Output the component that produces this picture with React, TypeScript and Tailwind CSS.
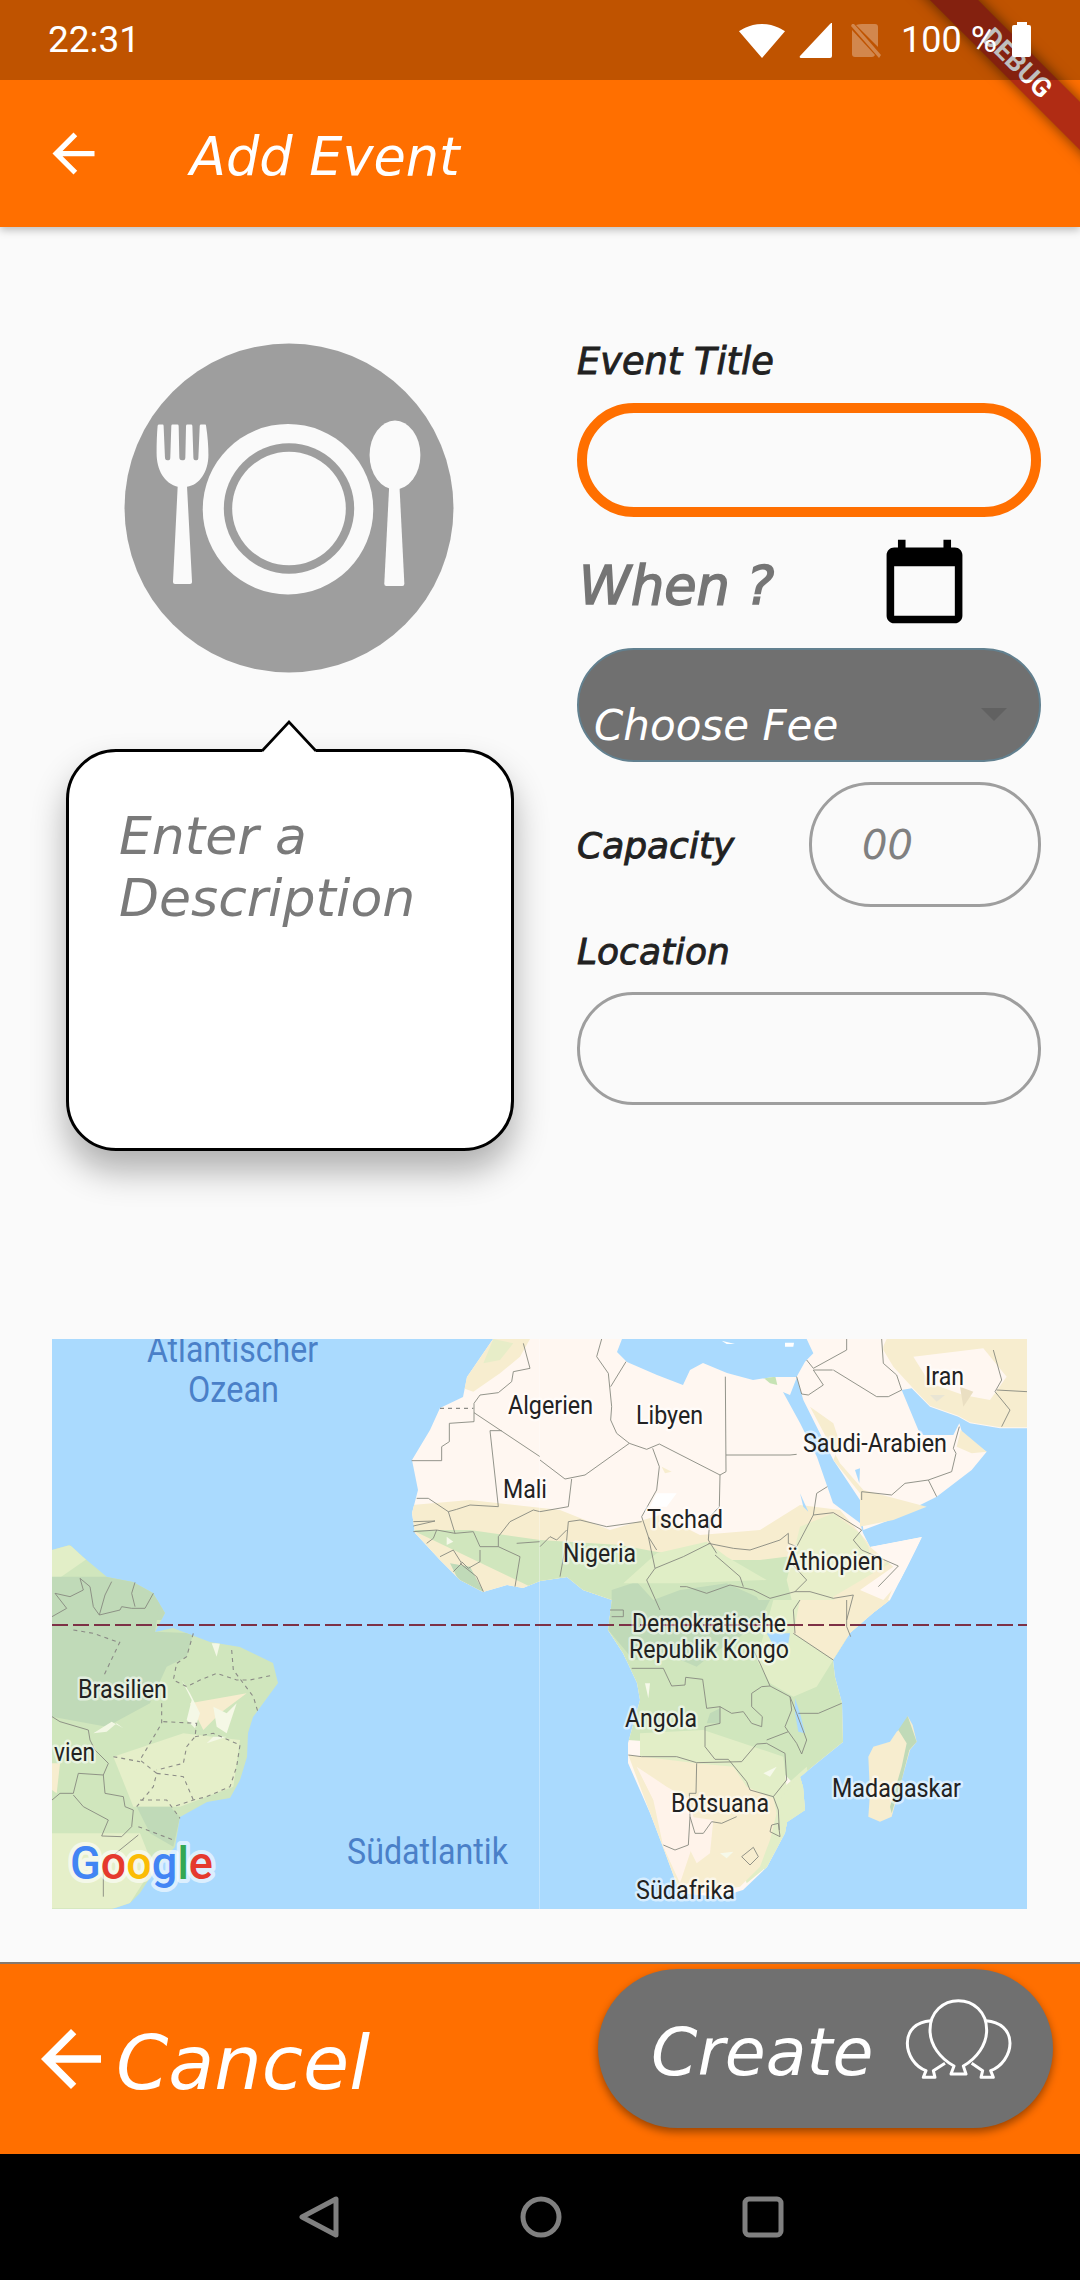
import React from "react";

const Z = ({ ox, oy, children }: { ox: number; oy: number; children: React.ReactNode }) => (
  <g transform={`translate(${ox} ${oy}) scale(${1 / 3})`}>{children}</g>
);

const B = ({ p, dash }: { p: string; dash?: boolean }) => (
  <polyline
    points={p}
    fill="none"
    stroke={dash ? "#8b8b86" : "#87897f"}
    strokeWidth={dash ? 1.1 : 0.9}
    strokeDasharray={dash ? "4 4" : undefined}
    vectorEffect="non-scaling-stroke"
  />
);

const F = ({ p, c }: { p: string; c: string }) => <polygon points={p} fill={c} />;

const L = ({ t, x, y, w, blue, halo }: { t: string; x: number; y: number; w: number; blue?: boolean; halo?: string }) => (
  <text
    x={x}
    y={y}
    textLength={w}
    lengthAdjust="spacingAndGlyphs"
    fontFamily="Roboto, sans-serif"
    fontSize={blue ? 36 : 25}
    fill={blue ? "#4a80c8" : "#222222"}
    stroke={blue ? "none" : halo ?? "rgba(255,255,255,0.55)"}
    strokeWidth={blue ? 0 : 5}
    strokeLinejoin="round"
    style={{ paintOrder: "stroke" }}
  >
    {t}
  </text>
);

const WATER = "#aadafe";
const CREAM = "#fff7f1";
const TAN = "#f7edcf";
const LIGHT = "#e2eec7";
const MID = "#d0e6bd";
const DARK = "#c0dab8";

const AFRICA =
  "493,1339 467,1377 463,1397 440,1408 430,1430 412,1460 418,1490 412,1513 415,1533 440,1560 460,1580 483,1592 507,1585 523,1588 540,1581 567,1577 583,1590 612,1600 608,1630 623,1653 637,1683 640,1700 628,1743 628,1763 650,1813 663,1847 680,1893 720,1897 743,1890 767,1867 785,1833 787,1822 805,1810 803,1787 800,1777 817,1763 843,1742 842,1703 835,1677 833,1660 850,1633 873,1613 890,1600 907,1567 922,1537 870,1547 863,1533 860,1523 833,1503 817,1457 800,1423 783,1392 790,1395 797,1377 773,1377 753,1380 727,1373 703,1363 690,1370 683,1385 657,1375 627,1362 617,1352 622,1339";

const ARABIA =
  "800,57 1461,57 1461,325 1380,325 1290,310 1255,290 1170,260 1115,205 1085,210 1135,330 1150,345 1240,345 1258,310 1270,350 1340,395 1295,450 1190,530 1050,600 970,630 960,540 880,420 830,320 790,240 770,170 795,125 820,100";

const SAMERICA =
  "52,1550 70,1545 83,1557 107,1577 133,1582 153,1593 165,1613 155,1632 173,1628 210,1642 240,1647 273,1663 278,1683 253,1717 248,1733 247,1757 240,1780 230,1798 207,1802 180,1817 175,1847 157,1867 140,1893 130,1903 112,1909 52,1909";

function MapView() {
  return (
    <svg viewBox="52 1339 975 570" className="block w-full h-full">
      <defs>
        <clipPath id="africa">
          <polygon points={AFRICA} />
        </clipPath>
        <clipPath id="samerica">
          <polygon points={SAMERICA} />
        </clipPath>
      </defs>
      <rect x="52" y="1339" width="975" height="570" fill={WATER} />

      <g clipPath="url(#samerica)">
        <rect x="52" y="1500" width="300" height="420" fill={MID} />
        <Z ox={40} oy={1320}>
          <F p="36,660 130,690 150,710 36,790" c={LIGHT} />
          <F p="36,770 370,770 380,900 36,900" c={DARK} />
        </Z>
        <Z ox={40} oy={1600}>
          <F p="0,0 360,0 345,95 460,100 440,170 380,200 330,310 200,380 36,350" c={DARK} />
          <F p="220,470 430,400 600,420 580,560 420,620 280,620" c="#e5efc9" />
          <F p="450,310 620,280 540,340 490,390" c={TAN} />
          <F p="36,700 300,700 340,800 260,925 36,925" c="#e5efc9" />
          <F p="36,580 100,580 130,620 60,660 36,640" c={MID} />
          <F p="36,490 60,490 50,580 36,570" c={TAN} />
          <F p="290,620 390,620 420,650 400,740 330,700" c={DARK} />
          <F p="425,240 455,300 440,360 465,385 480,340 450,280" c="#f4f8e6" />
          <F p="520,320 560,340 590,310 560,400 530,380" c="#f5f8e6" />
          <F p="160,400 215,365 250,385 230,370 200,395" c="#f2f7e4" />
          <F p="500,430 520,410 560,410" c="#f4f8e6" />
          <F p="515,130 530,170 540,130" c="#f4f8e6" />
        </Z>
      </g>

      <g clipPath="url(#africa)">
        <rect x="400" y="1339" width="560" height="570" fill={CREAM} />
        <F p="412,1505 470,1500 560,1510 610,1530 660,1515 700,1535 760,1530 800,1505 840,1510 870,1545 900,1570 880,1620 830,1660 620,1660 412,1560" c={TAN} />
        <F p="412,1530 470,1530 540,1540 620,1545 700,1560 760,1560 800,1555 830,1560 800,1630 860,1640 860,1770 800,1790 770,1760 700,1745 628,1740 600,1620" c={MID} />
        <Z ox={40} oy={1320}>
          <F p="1360,57 1470,57 1440,110 1380,160 1300,215 1270,205 1285,140" c={TAN} />
          <F p="1360,57 1420,70 1380,120 1330,130" c="#e7edc8" />
          <F p="1230,730 1290,740 1330,815 1260,790" c={DARK} />
          <F p="1220,650 1240,665 1220,675" c="#f6f9ea" />
        </Z>
        <Z ox={540} oy={1320}>
          <F p="215,860 215,810 290,785 340,840 420,810 560,790 650,830 680,880 690,900 215,900" c={DARK} />
          <F p="350,520 410,520 380,560 330,560" c="#ffffff" />
          <F p="780,620 880,580 960,640 985,680 1000,760 1130,650 1000,880 900,900 770,900 740,780" c="#e8efca" />
          <F p="880,830 1100,700 1000,880 900,900" c={TAN} />
          <F p="990,680 1145,650 1100,760 1030,840 960,810 1060,740" c={CREAM} />
          <F p="672,175 705,165 712,195 690,190" c="#c6e3b4" />
          <F p="365,440 395,455 375,460" c={TAN} />
          <F p="780,520 805,575 790,560" c={WATER} />
          <F p="350,700 500,665 560,710 680,780 420,790 250,790" c="#e0eec6" />
        </Z>
        <Z ox={540} oy={1600}>
          <F p="210,0 690,0 660,60 600,110 520,160 470,200 400,170 280,180 205,90" c={DARK} />
          <F p="700,0 780,0 760,100 880,180 830,260 760,290 690,250 650,180" c={LIGHT} />
          <F p="780,0 1050,0 930,100 880,180 760,100" c={TAN} />
          <F p="510,340 540,325 540,370 500,370" c={DARK} />
          <F p="300,400 490,390 640,440 730,470 740,560 790,530 800,650 735,700 680,800 620,850 560,650 470,500 300,470" c={LIGHT} />
          <F p="700,590 800,500 830,660 735,720 680,820 640,760" c={LIGHT} />
          <F p="265,465 470,490 580,500 620,560 700,595 710,640 690,720 660,800 600,860 420,890 330,640" c={TAN} />
          <F p="290,500 340,600 370,740 420,850 470,700 450,600 380,560" c="#fff3ea" />
          <F p="450,650 520,660 510,760 470,790 440,730" c="#fff3ea" />
          <F p="780,520 800,520 790,640 735,690 720,600" c={LIGHT} />
          <F p="670,520 710,500 690,530" c="#f6f9ea" />
          <F p="540,760 580,755 560,775" c="#f6f9ea" />
          <F p="315,250 330,250 325,295" c="#f6f9ea" />
          <F p="765,295 780,340 795,400 775,395 765,340" c={WATER} />
          <F p="680,100 750,100 745,130 700,135" c={WATER} />
        </Z>
      </g>

      <Z ox={540} oy={1320}>
        <polygon points={ARABIA} fill={CREAM} />
        <F p="1030,57 1461,57 1461,322 1380,322 1290,307 1255,287 1170,257 1115,200 1060,140 1030,90" c={TAN} />
        <F p="1120,110 1330,85 1400,170 1350,240 1270,225 1170,190" c={CREAM} />
        <F p="1260,200 1300,215 1270,260" c="#eadfc2" />
        <F p="1170,225 1215,225 1190,245" c="#e9e5d4" />
        <F p="810,260 880,310 900,370 880,420 960,520 960,620 1060,600 1160,560 970,510 900,430" c={TAN} />
        <F p="1262,330 1340,395 1295,400 1250,380" c={TAN} />
        <F p="1020,57 1040,57 1020,100" c={CREAM} />
        <F p="945,450 960,445 958,490" c={WATER} />
        <F p="545,62 585,72 560,72" c="#ffffff" />
        <F p="735,68 762,68 760,80 735,80" c="#ffffff" />
      </Z>
      <Z ox={540} oy={1600}>
        <polygon points="1103,348 1118,375 1130,425 1110,450 1085,540 1055,650 1020,665 985,650 990,580 985,470 1000,440 1050,425 1070,395 1095,375" fill={TAN} />
        <polygon points="1075,390 1103,348 1130,425 1108,450 1085,540 1055,640 1050,620 1085,500 1100,430" fill={DARK} />
      </Z>

      <Z ox={40} oy={1320}>
        <B p="1115,422 1205,422 1205,380 1228,365 1228,310 1302,305 1302,250 1320,225 1375,218 1415,185 1420,155 1470,145 1450,70" />
        <B p="1200,265 1300,265" dash />
        <B p="1302,278 1500,410" />
        <B p="1350,332 1385,332" />
        <B p="1350,332 1375,560 1290,555 1250,568 1225,575 1165,535 1130,535" />
        <B p="1225,575 1245,640 1300,635 1320,680 1375,680 1375,650 1410,605 1480,570 1500,575" />
        <B p="1120,605 1185,603 1120,618" />
        <B p="1120,635 1190,630 1180,655 1160,670" />
        <B p="1245,640 1190,630" />
        <B p="1200,710 1240,690 1265,730 1240,755" />
        <B p="1265,725 1285,745 1320,725 1320,690" />
        <B p="1430,670 1500,665" />
        <B p="1375,680 1440,710 1425,800" />
        <B p="1260,730 1310,770 1330,815" />
        <B p="45,820 90,830 130,810 120,775 150,800 160,860 178,885 240,870 245,860 275,865 315,865 340,820" />
        <B p="178,885 195,825 215,785" />
        <B p="285,787 275,820 285,860" />
        <B p="45,820 80,865 36,890" />
      </Z>
      <Z ox={540} oy={1320}>
        <B p="185,57 170,110 205,160 215,260 212,300 230,340 268,370" />
        <B p="268,370 320,388 358,372 540,465 558,455 556,170" />
        <B p="258,125 212,200" />
        <B p="558,405 750,405 770,403" />
        <B p="540,465 538,560 510,590 505,660 530,700" />
        <B p="268,370 135,465 75,477 0,420" />
        <B p="338,385 358,440 350,510 305,590 325,650 350,690" />
        <B p="95,477 85,560 0,575" />
        <B p="85,605 120,600 200,620 305,605" />
        <B p="85,605 80,660 60,770" />
        <B p="0,680 30,650 50,660 80,630" />
        <B p="325,650 345,745 320,780 360,870" />
        <B p="505,670 580,685 630,690 720,660 745,640 745,670 770,680 820,585 880,578 965,630" />
        <B p="820,585 830,520 862,500" />
        <B p="345,745 430,710 510,670" />
        <B p="420,800 440,800 500,820 570,795 640,810 690,835 765,815" />
        <B p="525,705 600,770 610,800" />
        <B p="765,815 800,780 745,720" />
        <B p="765,815 810,815 880,835 940,825 920,900" />
        <B p="965,630 940,660 965,690 1075,738 1015,800" />
        <B p="880,150 1010,230 1045,230 1085,210" />
        <B p="770,170 785,222 805,225 850,195 820,150 878,150" />
        <B p="800,120 820,145 920,90 920,57" />
        <B p="1025,57 1030,130 1070,165 1085,210" />
        <B p="965,515 1055,525 1095,490 1165,480 1235,455 1248,400 1240,385 1258,320" />
        <B p="1165,480 1190,530" />
        <B p="965,515 965,540" />
        <B p="1360,90 1385,180 1365,215 1410,270 1385,320" />
        <B p="1370,210 1461,215" />
      </Z>
      <Z ox={40} oy={1600}>
        <B p="36,350 60,365 145,390 150,420 165,450 205,490 190,525 115,520 100,580 60,580 36,600" />
        <B p="190,525 195,580 250,590 255,620 280,630 275,680 245,710 185,708 205,660 130,620 100,585" />
        <B p="295,705 190,790 190,890" />
        <B p="240,125 190,230" dash />
        <B p="460,100 440,170 410,190 400,240 440,260 480,240 530,220 590,240 630,240 700,225" dash />
        <B p="365,310 365,370 300,480 350,520 340,560 290,620" dash />
        <B p="370,365 470,370 465,410 440,440 430,490 350,510" dash />
        <B p="465,410 520,400 600,435 590,500 570,560 500,590 460,600 400,620" dash />
        <B p="350,520 430,530 460,600" dash />
        <B p="220,470 300,485" dash />
        <B p="300,600 380,600 420,655" dash />
        <B p="295,680 400,720" dash />
        <B p="575,150 580,210 640,290 655,340" dash />
        <B p="100,90 160,100 230,125" dash />
      </Z>
      <Z ox={540} oy={1600}>
        <B p="210,30 250,30 250,50 215,50" />
        <B p="275,205 370,205 395,258 435,255 437,232 488,238 500,325 540,320 575,340 610,335 635,370 665,380 667,350 635,320 635,280 665,260 690,258 750,290 770,340 800,420 785,462 770,430 745,395 735,380 755,330 750,290" />
        <B p="690,258 660,190 640,150" />
        <B p="760,100 880,180" />
        <B p="765,100 760,30 780,0" />
        <B p="920,0 920,80 932,110" />
        <B p="775,340 835,340 905,310" />
        <B p="495,380 495,440 525,478 565,478 620,545 630,570 700,590 740,540 735,460 680,430 650,432 605,485 470,488 410,470 305,470 265,465" />
        <B p="680,420 745,395" />
        <B p="470,490 468,580 448,580 450,650 445,735 405,750 370,735" />
        <B p="450,650 465,700 490,700 515,665 545,670 590,650" />
        <B p="700,590 715,630 718,690" />
        <B p="695,675 715,670 720,710 690,695 695,675" />
        <B p="605,770 640,742 655,770 630,795 605,770" />
        <B p="495,380 540,370 540,320" />
      </Z>

      <line x1="539.5" y1="1339" x2="539.5" y2="1909" stroke="#ffffff" strokeOpacity="0.3" strokeWidth="1" />
      <line x1="52" y1="1625" x2="1027" y2="1625" stroke="#7d3146" strokeWidth="2" strokeDasharray="16 5" />

      <L blue t="Atlantischer" x={147} y={1362} w={171} />
      <L blue t="Ozean" x={188} y={1402} w={91} />
      <L blue t="Südatlantik" x={347} y={1864} w={161} />
      <L t="Algerien" x={508} y={1414} w={85} />
      <L t="Libyen" x={636} y={1424} w={67} />
      <L t="Mali" x={503} y={1498} w={44} />
      <L t="Iran" x={925} y={1385} w={39} />
      <L t="Saudi-Arabien" x={803} y={1452} w={144} />
      <L t="Tschad" x={647} y={1528} w={76} />
      <L t="Nigeria" x={563} y={1562} w={73} />
      <L t="Äthiopien" x={785} y={1570} w={98} />
      <L t="Demokratische" x={632} y={1632} w={154} />
      <L t="Republik Kongo" x={629} y={1658} w={160} />
      <L t="Angola" x={625} y={1727} w={72} />
      <L t="Botsuana" x={671} y={1812} w={98} />
      <L t="Madagaskar" x={832} y={1797} w={129} />
      <L t="Südafrika" x={636} y={1899} w={99} />
      <L t="Brasilien" x={78} y={1698} w={89} />
      <L t="vien" x={54} y={1761} w={41} />

      <text
        x={70}
        y={1879}
        textLength={143}
        lengthAdjust="spacingAndGlyphs"
        fontFamily="Roboto, sans-serif"
        fontWeight={500}
        fontSize={46}
        stroke="rgba(255,255,255,0.6)"
        strokeWidth={8}
        strokeLinejoin="round"
        style={{ paintOrder: "stroke" }}
      >
        <tspan fill="#4285f4">G</tspan>
        <tspan fill="#e5392e">o</tspan>
        <tspan fill="#fbbc05">o</tspan>
        <tspan fill="#4285f4">g</tspan>
        <tspan fill="#34a853">l</tspan>
        <tspan fill="#e5392e">e</tspan>
      </text>
    </svg>
  );
}

function PlateIcon() {
  return (
    <svg viewBox="256 70 984 987" className="block w-full h-full">
      <circle cx="748" cy="563.5" r="492" fill="#9e9e9e" />
      <path
        fill="#fafafa"
        d="M355 318 Q355 314 360 314 H370 Q373 314 373 318 L377 412 Q377 421 384 421 H388 Q393 421 393 412 L396 318 Q396 314 400 314 H414 Q418 314 418 318 L420 412 Q420 421 428 421 H432 Q438 421 438 412 L440 318 Q440 314 444 314 H455 Q459 314 459 318 L462 412 Q462 421 468 421 H472 Q477 421 477 412 L481 318 Q481 314 485 314 H497 Q500 314 500 318 C505 350 507 380 507 405 C507 455 480 495 443 500 L458 785 Q458 791 452 791 H407 Q401 791 401 785 L415 500 C375 490 352 450 352 400 C352 370 353 340 355 318 Z"
      />
      <circle cx="745" cy="567" r="255" fill="#fafafa" />
      <circle cx="748" cy="565" r="195" fill="#9e9e9e" />
      <circle cx="748" cy="565" r="170" fill="#fafafa" />
      <ellipse cx="1065" cy="405" rx="76" ry="103" fill="#fafafa" />
      <path fill="#fafafa" d="M1048 490 H1078 L1093 790 Q1093 797 1087 797 H1039 Q1033 797 1033 790 Z" />
    </svg>
  );
}

const labelCls = "font-['DejaVu_Sans',sans-serif] italic text-[#212121] [-webkit-text-stroke:0.9px_#212121]";
const dejavu = "font-['DejaVu_Sans',sans-serif] italic";

export default function App() {
  return (
    <div className="relative w-[1080px] h-[2280px] flex flex-col bg-[#fafafa] overflow-hidden">
      {/* App bar */}
      <header className="relative z-10 h-[227px] shrink-0 pt-[80px] bg-[#ff6f00] shadow-[0_3px_8px_rgba(0,0,0,0.25)]">
        <div className="h-[147px] flex items-center pl-[42px]">
          <svg width="63" height="63" viewBox="0 0 24 24" fill="#ffffff" className="shrink-0">
            <path d="M20 11H7.83l5.59-5.59L12 4l-8 8 8 8 1.41-1.41L7.83 13H20v-2z" />
          </svg>
          <h1 className={`${dejavu} ml-[85px] mt-[6px] text-[52.5px] leading-[61px] text-white font-normal`}>Add Event</h1>
        </div>
      </header>

      {/* Debug banner */}
      <div className="absolute z-20 top-0 right-0 w-[200px] h-[200px] overflow-hidden pointer-events-none">
        <div className="absolute left-[-13px] top-[46px] w-[300px] h-[34px] rotate-45 bg-[#b02c14] shadow-[0_0_14px_rgba(0,0,0,0.55)] flex items-center justify-center font-['Roboto',sans-serif] font-bold text-[27px] leading-[34px] text-white">
          DEBUG
        </div>
      </div>

      {/* Status bar */}
      <div className="absolute z-30 top-0 left-0 w-full h-[80px] bg-black/25 flex items-center pl-[48px] font-['Roboto',sans-serif] text-white text-[36px] leading-[80px]">
        <span className="text-[37px]">22:31</span>
        <div className="ml-auto flex items-start h-[80px]">
          <svg width="46" height="34" viewBox="0.36 3 23.28 18.5" preserveAspectRatio="none" fill="#ffffff" className="mt-[24px]">
            <path d="M12.01 21.49L23.64 7c-.45-.34-4.93-4-11.64-4C5.28 3 .81 6.66.36 7l11.64 14.5.01-.01z" />
          </svg>
          <svg width="34" height="35" viewBox="0 0 34 35" fill="#ffffff" className="ml-[14px] mt-[23px]">
            <path d="M33 0 V33 Q33 35 31 35 H2 Q0 35 1 33 L31 1 Q33 -1 33 0 Z" />
          </svg>
          <svg width="30" height="34" viewBox="0 0 30 34" className="ml-[18px] mt-[24px]" fill="#ffffff" fillOpacity="0.3">
            <path d="M11 0 H24 Q27 0 27 3 V23 L5 1 Q8 0 11 0 Z" />
            <path d="M1 6 L24 31 Q23 33 21 33 H4 Q1 33 1 30 Z" />
            <path d="M1 0 L3 0 L30 31 L28 34 L0 2 Z" />
          </svg>
          <span className="ml-[20px] leading-[80px]">100 %</span>
          <svg width="19" height="35" viewBox="0 0 19 35" fill="#ffffff" className="ml-[15px] mt-[22px] mr-[49px]">
            <path d="M5 0 H15 V3 H17 Q19 3 19 5 V33 Q19 35 17 35 H2 Q0 35 0 33 V5 Q0 3 2 3 H5 Z" />
          </svg>
        </div>
      </div>

      {/* Main */}
      <main className="flex-1 min-h-0 pt-[115px]">
        <div className="flex items-start pl-[66px] h-[808px]">
          <div className="w-[448px] shrink-0 pt-[1px]">
            <div className="w-[330px] h-[330px] mx-auto -translate-x-px">
              <PlateIcon />
            </div>
            <div className="relative mt-[76px] h-[402px] rounded-[50px] border-[3px] border-black bg-white shadow-[0_20px_34px_rgba(0,0,0,0.3)] pt-[53px] pl-[50px]">
              <svg width="60" height="34" viewBox="0 0 60 34" className="absolute left-[190px] top-[-32px]">
                <path d="M3 33 V31 L30 2 L57 31 V33 Z" fill="#ffffff" />
                <path d="M3 31 L30 2 L57 31" fill="none" stroke="#000000" strokeWidth="2.6" />
              </svg>
              <p className={`${dejavu} text-[52px] leading-[62px] text-[#7a7a7a]`}>
                Enter a
                <br />
                Description
              </p>
            </div>
          </div>

          <div className="ml-[63px] w-[464px] shrink-0 flex flex-col">
            <div className={`${labelCls} text-[36.75px] leading-[40px]`}>Event Title</div>
            <div className="mt-[21px] h-[114px] rounded-[57px] border-[10px] border-[#ff6f00]" />
            <div className="mt-[19px] h-[91px] flex items-center">
              <span className={`${dejavu} w-[302px] pl-[2px] pt-[7px] text-[52.5px] leading-[61px] text-[#757575] [-webkit-text-stroke:1.6px_#757575]`}>When ?</span>
              <svg width="91" height="91" viewBox="0 0 24 24" fill="#000000">
                <path d="M20 3h-1V1h-2v2H7V1H5v2H4c-1.1 0-2 .9-2 2v16c0 1.1.9 2 2 2h16c1.1 0 2-.9 2-2V5c0-1.1-.9-2-2-2zm0 18H4V8h16v13z" />
              </svg>
            </div>
            <div className="mt-[21px] h-[114px] rounded-[57px] border-2 border-[#62808f] bg-[#707070] flex items-end justify-between pl-[15px] pb-[10px]">
              <span className={`${dejavu} text-[42px] leading-[48px] text-white`}>Choose Fee</span>
              <svg width="26" height="13" viewBox="0 0 26 13" fill="#616161" className="mr-[32px] mb-[29px]">
                <path d="M0 0 H26 L13 13 Z" />
              </svg>
            </div>
            <div className="mt-[20px] h-[125px] flex items-center justify-between">
              <span className={`${labelCls} mt-[3px] text-[36px] leading-[40px]`}>Capacity</span>
              <div className="w-[232px] h-[125px] rounded-[62px] border-[3px] border-[#9e9e9e] flex items-center pl-[50px]">
                <span className={`${dejavu} text-[40px] leading-[46px] text-[#808080]`}>00</span>
              </div>
            </div>
            <div className={`${labelCls} mt-[25px] text-[36px] leading-[40px]`}>Location</div>
            <div className="mt-[20px] h-[113px] rounded-[56px] border-[3px] border-[#9e9e9e]" />
          </div>
        </div>

        <div className="mt-[189px] ml-[52px] w-[975px] h-[570px] overflow-hidden">
          <MapView />
        </div>
      </main>

      {/* Bottom bar */}
      <footer className="h-[192px] shrink-0 border-t-2 border-[#86786d] bg-[#ff6f00] flex items-start justify-between pl-[26px] pr-[27px]">
        <div className="flex items-start">
          <svg width="90" height="90" viewBox="0 0 24 24" fill="#ffffff" className="mt-[50px]">
            <path d="M20 11H7.83l5.59-5.59L12 4l-8 8 8 8 1.41-1.41L7.83 13H20v-2z" />
          </svg>
          <span className={`${dejavu} mt-[56px] text-[75px] leading-[86px] text-white`}>Cancel</span>
        </div>
        <div className="mt-[5px] w-[455px] h-[159px] rounded-[80px] bg-[#707070] shadow-[0_4px_8px_rgba(0,0,0,0.4)] flex items-start pl-[53px]">
          <span className={`${dejavu} mt-[45px] text-[66.5px] leading-[76px] text-white`}>Create</span>
          <svg width="160" height="120" viewBox="0 0 480 360" fill="none" stroke="#ffffff" strokeWidth="9" strokeLinejoin="round" className="ml-[7px] mt-[11px]">
            <path d="M222 258 C180 235 150 195 150 150 C150 95 190 62 235 62 C280 62 320 95 320 150 C320 195 290 235 250 258 L258 282 H213 Z" />
            <path d="M152 122 C110 125 82 150 82 190 C82 225 105 260 138 272 L130 292 H165 L160 272 L195 250" />
            <path d="M318 122 C360 125 390 150 390 190 C390 225 365 260 332 272 L340 292 H303 L308 272 L275 250" />
          </svg>
        </div>
      </footer>

      {/* Navigation bar */}
      <nav className="h-[126px] shrink-0 bg-black flex items-center pl-[298px] gap-[180px]">
        <svg width="42" height="42" viewBox="0 0 42 42" fill="none" stroke="#808080" strokeWidth="5" strokeLinejoin="round">
          <path d="M38 3 V39 L4 21 Z" />
        </svg>
        <svg width="42" height="42" viewBox="0 0 42 42" fill="none" stroke="#808080" strokeWidth="5">
          <circle cx="21" cy="21" r="18" />
        </svg>
        <svg width="42" height="42" viewBox="0 0 42 42" fill="none" stroke="#808080" strokeWidth="5">
          <rect x="3" y="3" width="36" height="36" rx="4" />
        </svg>
      </nav>
    </div>
  );
}
